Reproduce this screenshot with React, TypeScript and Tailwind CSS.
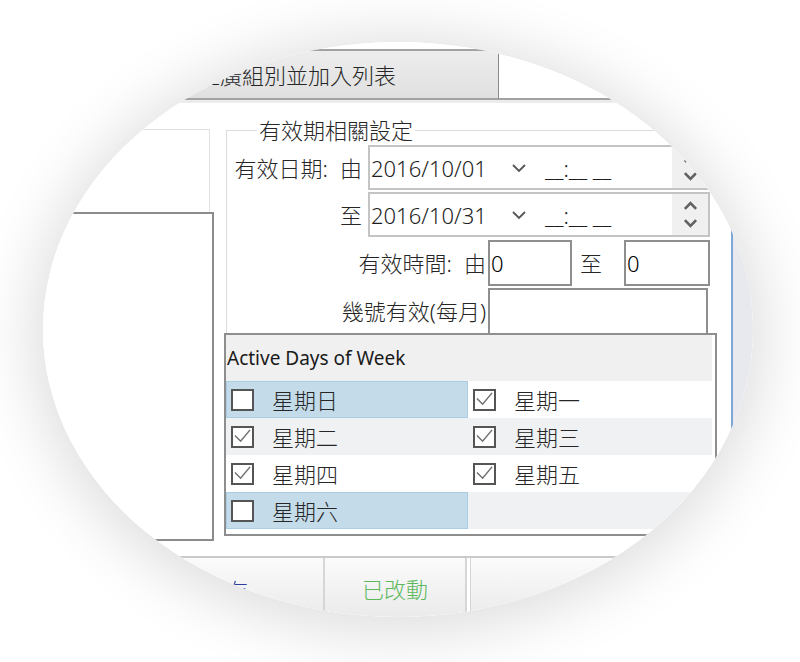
import React from "react";

const CJK = "font-['Noto_Sans','Noto_Sans_CJK_TC',sans-serif]";

function ChevronDown({ className = "" }: { className?: string }) {
  return (
    <svg viewBox="0 0 16 10" className={className} fill="none" stroke="currentColor" strokeWidth="1.8">
      <polyline points="2,2 8,8 14,2" />
    </svg>
  );
}
function ChevronUp({ className = "" }: { className?: string }) {
  return (
    <svg viewBox="0 0 16 10" className={className} fill="none" stroke="currentColor" strokeWidth="2.8">
      <polyline points="2,8 8,2 14,8" />
    </svg>
  );
}
function ChevronDownBold({ className = "" }: { className?: string }) {
  return (
    <svg viewBox="0 0 16 10" className={className} fill="none" stroke="currentColor" strokeWidth="2.8">
      <polyline points="2,2 8,8 14,2" />
    </svg>
  );
}

function DateBox({ date }: { date: string }) {
  return (
    <div className="ml-[6px] flex h-full w-[342px] items-center border-2 border-[#c4c4c4] bg-white">
      <span className="w-[141px] pl-[1px] text-[22px] leading-none text-[#1e1e1e] font-['Noto_Sans',sans-serif]">{date}</span>
      <ChevronDown className="h-[10px] w-[16px] text-[#555]" />
      <span className="ml-[18px] text-[22px] leading-none text-[#1e1e1e] font-['Noto_Sans',sans-serif]">__:__ __</span>
      <div className="flex-1" />
      <div className="flex h-full w-[36px] flex-col items-center justify-center gap-[7px] bg-[#f0f0f0] text-[#616161]">
        <ChevronUp className="h-[10px] w-[15px]" />
        <ChevronDownBold className="h-[10px] w-[15px]" />
      </div>
    </div>
  );
}

function Check({ checked }: { checked: boolean }) {
  return (
    <div className="flex h-[22px] w-[23px] shrink-0 items-center justify-center border-2 border-[#555] bg-white">
      {checked && (
        <svg viewBox="0 0 20 18" className="h-[17px] w-[19px]" fill="none" stroke="#707070" strokeWidth="1.6">
          <polyline points="2,8 8,14 18,2" />
        </svg>
      )}
    </div>
  );
}

function Day({ label, checked, hl }: { label: string; checked: boolean; hl?: boolean }) {
  return (
    <div
      className={
        "flex h-full items-center pl-[4px] " +
        (hl ? "border border-[#a9cde4] bg-[#c4dbe9]" : "border border-transparent")
      }
    >
      <Check checked={checked} />
      <span className={"ml-[18px] text-[22px] font-light leading-none text-[#262626] " + CJK}>{label}</span>
    </div>
  );
}

export default function App() {
  return (
    <div className="relative h-[662px] w-[800px] overflow-hidden bg-white">
      <div className="absolute left-[43px] top-[42px] h-[575px] w-[710px] overflow-hidden rounded-[50%] bg-white shadow-[0_6px_60px_12px_rgba(0,0,0,0.13)]">
        <div className={"ml-[-43px] mt-[-42px] flex h-[662px] w-[800px] flex-col bg-white font-light " + CJK}>
          <div className="h-[49px] shrink-0" />
          {/* tab strip */}
          <div className="flex h-[51px] shrink-0">
            <div className="flex w-[498px] items-center justify-end border-b-2 border-t-2 border-[#a2a2a2] bg-gradient-to-b from-[#ededed] to-[#e0e0e0] pr-[102px] text-[22px] leading-none text-[#262626]">
              選擇推廣組別並加入列表
            </div>
            <div className="flex-1 border-b-2 border-l border-[#a2a2a2] border-l-[#8a8a8a] bg-white" />
          </div>
          <div className="h-[3px] shrink-0 bg-[#ececec]" />
          {/* main area */}
          <div className="flex h-[453px] shrink-0">
            {/* left column */}
            <div className="flex w-[214px] shrink-0 flex-col pt-[26px]">
              <div className="mr-[4px] h-[83px] border-r border-t border-[#e0e0e0]" />
              <div className="mb-[15px] flex-1 border-2 border-[#8c8c8c] bg-white" />
            </div>
            {/* right column */}
            <div className="ml-[10px] flex w-[505px] shrink-0 flex-col pt-[16px]">
              <fieldset className="ml-[2px] flex flex-col border-l border-t border-[#dcdcdc] pb-0">
                <legend className="ml-[30px] px-[2px] text-[22px] leading-[22px] text-[#262626]">有效期相關設定</legend>
                <div className="mt-[4px] flex h-[45px] items-center">
                  <span className="w-[135px] text-right text-[22px] leading-none text-[#262626]">有效日期:<span className="ml-[12px]">由</span></span>
                  <DateBox date="2016/10/01" />
                </div>
                <div className="mt-[2px] flex h-[45px] items-center">
                  <span className="w-[135px] text-right text-[22px] leading-none text-[#262626]">至</span>
                  <DateBox date="2016/10/31" />
                </div>
                <div className="mt-[3px] flex h-[46px] items-center">
                  <span className="w-[259px] text-right text-[22px] leading-none text-[#262626]">有效時間:<span className="ml-[12px]">由</span></span>
                  <div className="ml-[2px] flex h-full w-[84px] items-center border-2 border-[#8e8e8e] bg-white pl-[1px] text-[22px] leading-none font-['Noto_Sans',sans-serif]">0</div>
                  <span className="w-[52px] pl-[8px] text-[22px] leading-none text-[#262626]">至</span>
                  <div className="flex h-full w-[86px] items-center border-2 border-[#8e8e8e] bg-white pl-[1px] text-[22px] leading-none font-['Noto_Sans',sans-serif]">0</div>
                </div>
                <div className="mt-[2px] flex h-[45px] items-center">
                  <span className="w-[259px] text-right text-[22px] leading-none text-[#262626]">幾號有效(每月)</span>
                  <div className="ml-[2px] h-full w-[220px] border-2 border-b-0 border-[#8e8e8e] bg-white" />
                </div>
              </fieldset>
              <div className="flex w-[493px] flex-col border-2 border-[#8e8e8e] bg-white pb-[5px]">
                <div className="mr-[3px] flex h-[46px] items-center bg-[#f0f0f0] pl-[1px] text-[19px] font-normal leading-none text-[#1a1a1a] font-['Noto_Sans',sans-serif]">
                  Active Days of Week
                </div>
                <div className="mr-[3px] grid h-[37px] grid-cols-[242px_1fr] bg-white">
                  <Day label="星期日" checked={false} hl />
                  <Day label="星期一" checked />
                </div>
                <div className="mr-[3px] grid h-[37px] grid-cols-[242px_1fr] bg-[#f0f1f3]">
                  <Day label="星期二" checked />
                  <Day label="星期三" checked />
                </div>
                <div className="mr-[3px] grid h-[37px] grid-cols-[242px_1fr] bg-white">
                  <Day label="星期四" checked />
                  <Day label="星期五" checked />
                </div>
                <div className="mr-[3px] grid h-[37px] grid-cols-[242px_1fr] bg-[#f0f1f3]">
                  <Day label="星期六" checked={false} hl />
                  <div />
                </div>
              </div>
            </div>
            {/* right panel edge */}
            <div className="ml-[2px] mt-[110px] flex-1 border-l-2 border-[#7ea6d6] bg-[#e7e9ee]" />
          </div>
          {/* bottom buttons */}
          <div className="flex h-[70px] shrink-0 border-t-2 border-[#cacaca] bg-gradient-to-b from-[#fbfbfb] to-[#e8e8e8]">
            <div className="flex w-[323px] items-start justify-end pr-[75px] pt-[21px] text-[22px] leading-none text-[#2b3a9c]">儲存</div>
            <div className="w-[2px] bg-[#d6d6d6]" />
            <div className="flex w-[140px] items-start justify-center pt-[20px] text-[22px] leading-none text-[#5cb85c]">已改動</div>
            <div className="w-[2px] bg-[#d6d6d6]" />
            <div className="w-[3px] bg-white" />
            <div className="w-[1px] bg-[#d6d6d6]" />
            <div className="flex flex-1 items-start pl-[92px] pt-[22px] text-[22px] leading-none text-[#d9534f]">刪除</div>
          </div>
        </div>
      </div>
    </div>
  );
}
